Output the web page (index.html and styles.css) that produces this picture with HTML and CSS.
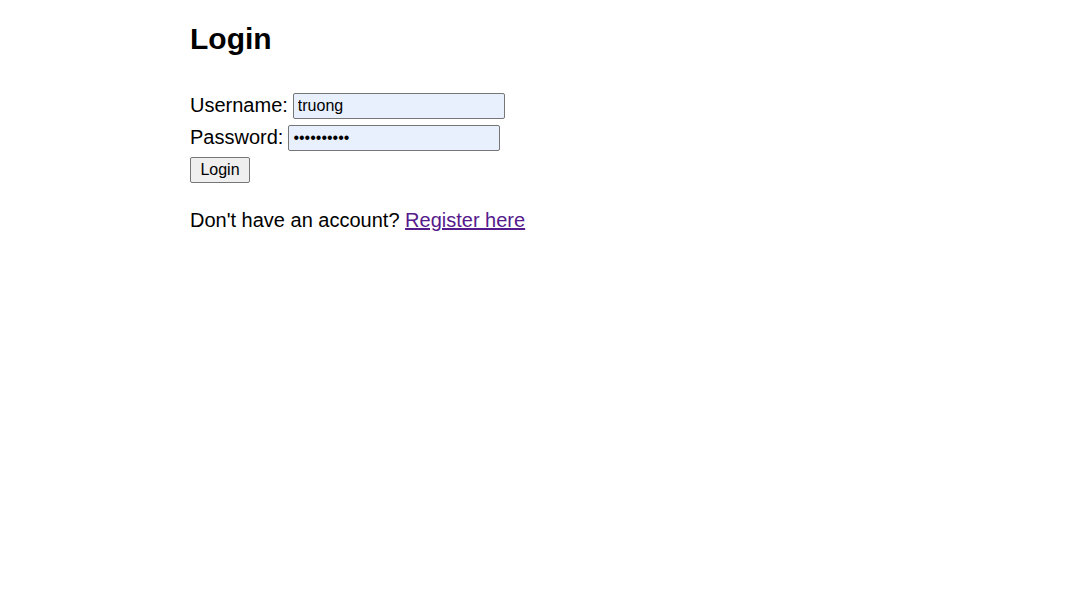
FILE: index.html
```html
<!DOCTYPE html>
<html>
<head>
<meta charset="utf-8">
<link rel="stylesheet" href="styles.css">
</head>
<body>
<main class="page">
  <h1 class="title">Login</h1>
  <form class="form">
    <div class="row">
      <label class="label">Username:</label>
      <input class="field" type="text" value="truong">
    </div>
    <div class="row">
      <label class="label">Password:</label>
      <input class="field" type="password" value="truong1234">
    </div>
    <div class="row">
      <button class="btn" type="button">Login</button>
    </div>
  </form>
  <p class="note">Don't have an account? <a class="link" href="#">Register here</a></p>
</main>
</body>
</html>
```
FILE: styles.css
```css
html, body {
  margin: 0;
  padding: 0;
  background: #fff;
}
body {
  font-family: "Liberation Sans", Arial, sans-serif;
  font-size: 20px;
  color: #000;
}
.page {
  width: 695px;
  margin: 0 auto;
  padding-top: 1px;
}
.title {
  font-size: 30px;
  font-weight: bold;
  margin: 20px 0 34px;
  line-height: 35px;
}
.form {
  margin: 0;
}
.row {
  display: flex;
  align-items: center;
  height: 32px;
}
.label {
  margin-right: 5px;
  padding-bottom: 2px;
}
.field {
  box-sizing: border-box;
  width: 212px;
  height: 26px;
  margin: 0;
  padding: 1px 4px;
  font-family: "Liberation Sans", Arial, sans-serif;
  font-size: 16px;
  color: #000;
  background: #e8f0fe;
  border: 1px solid #767676;
  border-radius: 2px;
}
.btn {
  box-sizing: border-box;
  width: 60px;
  height: 26px;
  margin: 0;
  padding: 0 6px;
  font-family: "Liberation Sans", Arial, sans-serif;
  font-size: 16px;
  color: #000;
  background: #efefef;
  border: 1px solid #767676;
  border-radius: 2px;
}
.note {
  margin: 23px 0 0;
}
.link {
  color: #551a8b;
}
```
